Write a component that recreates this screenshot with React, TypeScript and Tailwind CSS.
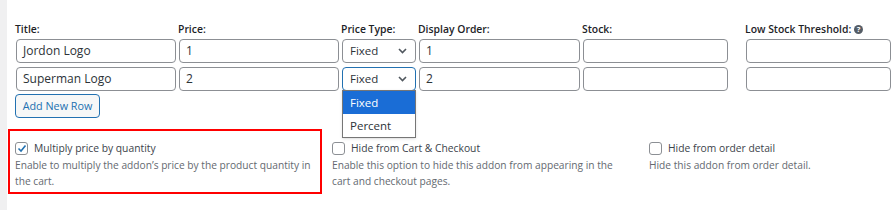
import React from "react";

const font = { fontFamily: '"Open Sans", "Noto Sans", sans-serif' };

function Chevron() {
  return (
    <svg width="9" height="6" viewBox="0 0 9 6" className="text-[#50575e]">
      <path d="M1 1 L4.5 4.5 L8 1" fill="none" stroke="currentColor" strokeWidth="1.6" />
    </svg>
  );
}

function HelpIcon() {
  return (
    <svg width="9" height="9" viewBox="0 0 10 10" className="ml-[3px]">
      <circle cx="5" cy="5" r="5" fill="#555d66" />
      <text x="5" y="8.2" textAnchor="middle" fontSize="8.5" fontWeight="700" fill="#fff" fontFamily="Open Sans, sans-serif">?</text>
    </svg>
  );
}

function Input({ value, w }: { value?: string; w: string }) {
  return (
    <div className={`${w} h-[24px] ml-[1px] border border-[#8c8f94] rounded-[4px] bg-white flex items-center px-[6px] text-[12px] text-[#2c3338]`}>
      {value}
    </div>
  );
}

function Select({ focused }: { focused?: boolean }) {
  return (
    <div className={`w-[74px] h-[24px] ml-[1px] border ${focused ? "border-[#2271b1]" : "border-[#8c8f94]"} rounded-[4px] bg-white flex items-center justify-between pl-[7px] pr-[8px] text-[11.5px] text-[#2c3338]`}>
      <span>Fixed</span>
      <Chevron />
    </div>
  );
}

function CheckBox({ checked }: { checked?: boolean }) {
  return (
    <div className="w-[13px] h-[13px] border border-[#8c8f94] rounded-[3px] bg-white flex items-center justify-center shrink-0">
      {checked && (
        <svg width="10" height="9" viewBox="0 0 10 9">
          <path d="M1.5 4.5 L4 7 L8.5 1.5" fill="none" stroke="#2271b1" strokeWidth="1.6" />
        </svg>
      )}
    </div>
  );
}

function Option({ checked, label, desc }: { checked?: boolean; label: string; desc: React.ReactNode }) {
  return (
    <div>
      <div className="flex items-center gap-[6px] h-[14px]">
        <CheckBox checked={checked} />
        <span className="text-[10.3px] text-[#3c434a] leading-[14px]">{label}</span>
      </div>
      <div className="mt-[2px] text-[10.2px] leading-[16px] text-[#646970]">{desc}</div>
    </div>
  );
}

export default function App() {
  const labelCls = "h-[14px] leading-[14px] text-[10.4px] font-semibold text-[#1d2327] flex items-center";
  return (
    <div className="w-[896px] h-[210px] bg-white flex overflow-hidden" style={font}>
      <div className="w-[7px] bg-[#f0f0f1] shrink-0" />
      <div className="flex-1">
        <div className="pl-[8px] pt-[22px]">
          <div className="grid grid-cols-[163px_163px_77px_164px_163px_145px] gap-y-[4px]">
            <div className={labelCls}>Title:</div>
            <div className={labelCls}>Price:</div>
            <div className={labelCls}>Price Type:</div>
            <div className={labelCls}>Display Order:</div>
            <div className={labelCls}>Stock:</div>
            <div className={labelCls}>
              Low Stock Threshold:
              <HelpIcon />
            </div>

            <div className="-mt-[1px]"><Input value="Jordon Logo" w="w-[160px]" /></div>
            <div className="-mt-[1px]"><Input value="1" w="w-[160px]" /></div>
            <div className="-mt-[1px]"><Select /></div>
            <div className="-mt-[1px]"><Input value="1" w="w-[161px]" /></div>
            <div className="-mt-[1px]"><Input w="w-[145px]" /></div>
            <div className="-mt-[1px]"><Input w="w-[145px]" /></div>

            <div><Input value="Superman Logo" w="w-[160px]" /></div>
            <div><Input value="2" w="w-[160px]" /></div>
            <div className="relative">
              <Select focused />
              <div className="absolute left-[1px] top-[23px] w-[74px] bg-white border border-[#767676] z-10 text-[11.5px] shadow-sm">
                <div className="h-[23px] bg-[#1a6dd6] text-white flex items-center px-[7px]">Fixed</div>
                <div className="h-[23px] text-[#2c3338] flex items-center px-[7px]">Percent</div>
              </div>
            </div>
            <div><Input value="2" w="w-[161px]" /></div>
            <div><Input w="w-[145px]" /></div>
            <div><Input w="w-[145px]" /></div>
          </div>

          <button className="mt-[3px] h-[24px] w-[85px] border border-[#2271b1] rounded-[4px] bg-[#f6f7f7] text-[#2271b1] text-[10.8px] flex items-center justify-center">
            Add New Row
          </button>
        </div>

        <div className="flex items-start mt-[11px] ml-[1px]">
          <div className="w-[314px] h-[65px] border-2 border-[#ff0000] pl-[5px] pt-[10px]">
            <Option checked label="Multiply price by quantity" desc={<>Enable to multiply the addon’s price by the product quantity in<br />the cart.</>} />
          </div>
          <div className="w-[317px] ml-[10px] pt-[12px]">
            <Option label="Hide from Cart & Checkout" desc={<>Enable this option to hide this addon from appearing in the<br />cart and checkout pages.</>} />
          </div>
          <div className="w-[240px] pt-[12px]">
            <Option label="Hide from order detail" desc="Hide this addon from order detail." />
          </div>
        </div>
      </div>
    </div>
  );
}
